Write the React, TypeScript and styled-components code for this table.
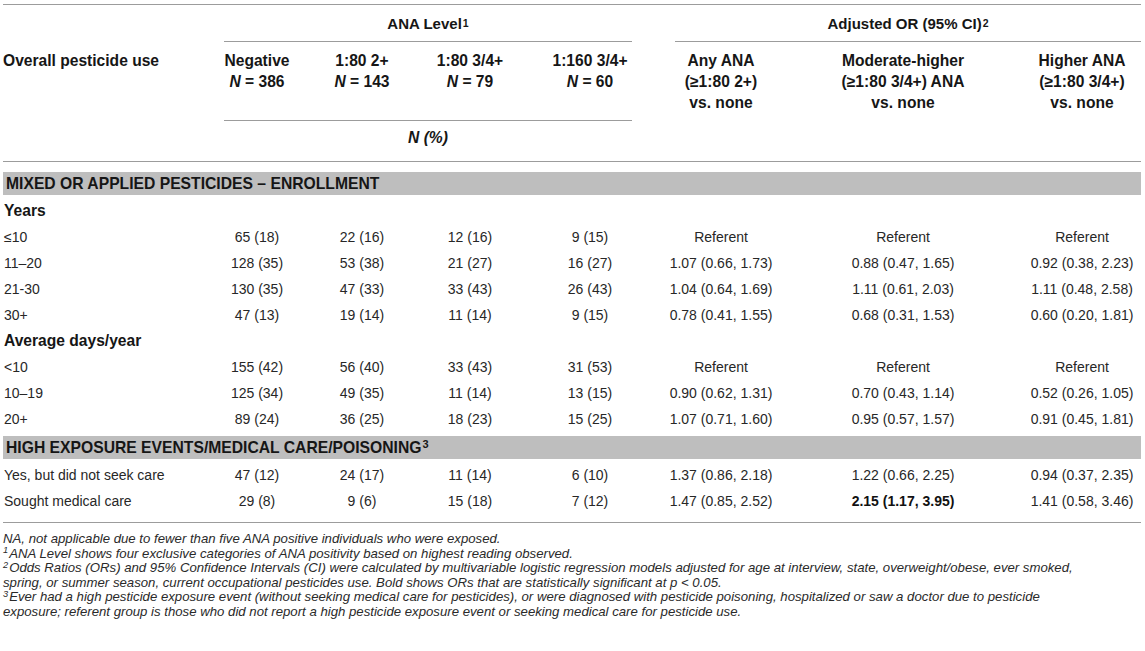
import React from "react";
import styled, { createGlobalStyle } from "styled-components";

const COLS = "211px 86px 124px 92px 148px 114px 250px 113px";
const LINE = "#9c9c9c";

const GlobalStyle = createGlobalStyle`
  html, body {
    margin: 0;
    padding: 0;
    background: #ffffff;
  }
  body {
    font-family: "Liberation Sans", Arial, sans-serif;
    color: #272727;
  }
`;

const Page = styled.div`
  width: 1138px;
  padding: 4px 4px 0 3px;
`;

const Table = styled.div`
  border-top: 1px solid ${LINE};
  border-bottom: 1px solid ${LINE};
`;

const Head = styled.div`
  display: grid;
  grid-template-columns: ${COLS};
  grid-template-rows: 37px 78px 41px;
  border-bottom: 1px solid ${LINE};
  font-weight: bold;
  font-size: 15.6px;
  color: #161616;
  white-space: nowrap;
`;

const Spanner = styled.div<{ $cols: string; $ml: number; $mr: number }>`
  grid-row: 1;
  grid-column: ${(p) => p.$cols};
  margin: 0 ${(p) => p.$mr}px 0 ${(p) => p.$ml}px;
  border-bottom: 1px solid ${LINE};
  display: flex;
  align-items: center;
  justify-content: center;
  font-size: 15px;
`;

const Sup = styled.sup`
  font-size: 0.7em;
  line-height: 0;
  vertical-align: 0.5em;
  margin-left: 1px;
`;

const Stub = styled.div`
  grid-row: 2;
  grid-column: 1;
  padding-top: 8px;
  line-height: 21px;
`;

const ColHead = styled.div<{ $col: number; $pr?: number }>`
  grid-row: 2;
  grid-column: ${(p) => p.$col};
  padding-top: 8px;
  padding-right: ${(p) => p.$pr ?? 0}px;
  line-height: 21px;
  text-align: center;
`;

const Unit = styled.div`
  grid-row: 3;
  grid-column: 2 / 6;
  margin: 0 32px 0 10px;
  border-top: 1px solid ${LINE};
  padding-top: 6px;
  line-height: 21px;
  text-align: center;
  font-style: italic;
`;

const Body = styled.div`
  padding: 6px 0 8px;
`;

const Row = styled.div`
  display: grid;
  grid-template-columns: ${COLS};
  height: 26px;
  align-items: center;
  font-size: 14px;
  white-space: nowrap;
  & > :last-child:not(:first-child) {
    padding-right: 5px;
  }
`;

const Label = styled.div<{ $head?: boolean }>`
  text-align: left;
  padding-left: 1px;
  font-weight: ${(p) => (p.$head ? "bold" : "normal")};
  font-size: ${(p) => (p.$head ? "15.6px" : "14px")};
  color: ${(p) => (p.$head ? "#161616" : "inherit")};
`;

const Cell = styled.div<{ $bold?: boolean }>`
  text-align: center;
  font-weight: ${(p) => (p.$bold ? "bold" : "normal")};
  color: ${(p) => (p.$bold ? "#111" : "inherit")};
`;

const Section = styled.div`
  padding: 4px 0 3px;
`;

const SectionBar = styled.div`
  background: #bebebe;
  height: 23px;
  line-height: 23px;
  padding-left: 3px;
  font-weight: bold;
  font-size: 15.7px;
  color: #161616;
  white-space: nowrap;
`;

const Notes = styled.div`
  padding-top: 9px;
  font-size: 13.2px;
  line-height: 14.5px;
  font-style: italic;
  color: #2a2a2a;
  white-space: nowrap;
`;

const NoteSup = styled.sup`
  font-size: 0.7em;
  line-height: 0;
  vertical-align: 0.45em;
  margin-right: 1px;
`;

type DataRow = { label: string; cells: string[]; bold?: number };

const sections: { title: string; note?: string; groups: { head?: string; rows: DataRow[] }[] }[] = [
  {
    title: "MIXED OR APPLIED PESTICIDES – ENROLLMENT",
    groups: [
      {
        head: "Years",
        rows: [
          { label: "≤10", cells: ["65 (18)", "22 (16)", "12 (16)", "9 (15)", "Referent", "Referent", "Referent"] },
          { label: "11–20", cells: ["128 (35)", "53 (38)", "21 (27)", "16 (27)", "1.07 (0.66, 1.73)", "0.88 (0.47, 1.65)", "0.92 (0.38, 2.23)"] },
          { label: "21-30", cells: ["130 (35)", "47 (33)", "33 (43)", "26 (43)", "1.04 (0.64, 1.69)", "1.11 (0.61, 2.03)", "1.11 (0.48, 2.58)"] },
          { label: "30+", cells: ["47 (13)", "19 (14)", "11 (14)", "9 (15)", "0.78 (0.41, 1.55)", "0.68 (0.31, 1.53)", "0.60 (0.20, 1.81)"] },
        ],
      },
      {
        head: "Average days/year",
        rows: [
          { label: "<10", cells: ["155 (42)", "56 (40)", "33 (43)", "31 (53)", "Referent", "Referent", "Referent"] },
          { label: "10–19", cells: ["125 (34)", "49 (35)", "11 (14)", "13 (15)", "0.90 (0.62, 1.31)", "0.70 (0.43, 1.14)", "0.52 (0.26, 1.05)"] },
          { label: "20+", cells: ["89 (24)", "36 (25)", "18 (23)", "15 (25)", "1.07 (0.71, 1.60)", "0.95 (0.57, 1.57)", "0.91 (0.45, 1.81)"] },
        ],
      },
    ],
  },
  {
    title: "HIGH EXPOSURE EVENTS/MEDICAL CARE/POISONING",
    note: "3",
    groups: [
      {
        rows: [
          { label: "Yes, but did not seek care", cells: ["47 (12)", "24 (17)", "11 (14)", "6 (10)", "1.37 (0.86, 2.18)", "1.22 (0.66, 2.25)", "0.94 (0.37, 2.35)"] },
          { label: "Sought medical care", cells: ["29 (8)", "9 (6)", "15 (18)", "7 (12)", "1.47 (0.85, 2.52)", "2.15 (1.17, 3.95)", "1.41 (0.58, 3.46)"], bold: 5 },
        ],
      },
    ],
  },
];

const columns: React.ReactNode[][] = [
  ["Negative", <><i>N</i> = 386</>],
  ["1:80 2+", <><i>N</i> = 143</>],
  ["1:80 3/4+", <><i>N</i> = 79</>],
  ["1:160 3/4+", <><i>N</i> = 60</>],
  ["Any ANA", "(≥1:80 2+)", "vs. none"],
  ["Moderate-higher", "(≥1:80 3/4+) ANA", "vs. none"],
  ["Higher ANA", "(≥1:80 3/4+)", "vs. none"],
];

export default function App() {
  return (
    <Page>
      <GlobalStyle />
      <Table>
        <Head>
          <Spanner $cols="2 / 6" $ml={10} $mr={32}>
            ANA Level<Sup>1</Sup>
          </Spanner>
          <Spanner $cols="6 / 9" $ml={11} $mr={0}>
            Adjusted OR (95% CI)<Sup>2</Sup>
          </Spanner>
          <Stub>Overall pesticide use</Stub>
          {columns.map((lines, i) => (
            <ColHead key={i} $col={i + 2} $pr={i === 6 ? 5 : 0}>
              {lines.map((line, j) => (
                <div key={j}>{line}</div>
              ))}
            </ColHead>
          ))}
          <Unit>N (%)</Unit>
        </Head>
        <Body>
          {sections.map((s) => (
            <React.Fragment key={s.title}>
              <Section>
                <SectionBar>
                  {s.title}
                  {s.note && <Sup>{s.note}</Sup>}
                </SectionBar>
              </Section>
              {s.groups.map((g, gi) => (
                <React.Fragment key={gi}>
                  {g.head && (
                    <Row>
                      <Label $head>{g.head}</Label>
                    </Row>
                  )}
                  {g.rows.map((r) => (
                    <Row key={r.label}>
                      <Label>{r.label}</Label>
                      {r.cells.map((c, ci) => (
                        <Cell key={ci} $bold={r.bold === ci}>
                          {c}
                        </Cell>
                      ))}
                    </Row>
                  ))}
                </React.Fragment>
              ))}
            </React.Fragment>
          ))}
        </Body>
      </Table>
      <Notes>
        <div>NA, not applicable due to fewer than five ANA positive individuals who were exposed.</div>
        <div>
          <NoteSup>1</NoteSup>ANA Level shows four exclusive categories of ANA positivity based on highest reading observed.
        </div>
        <div>
          <NoteSup>2</NoteSup>Odds Ratios (ORs) and 95% Confidence Intervals (CI) were calculated by multivariable logistic regression models adjusted for age at interview, state, overweight/obese, ever smoked,
          <br />
          spring, or summer season, current occupational pesticides use. Bold shows ORs that are statistically significant at p &lt; 0.05.
        </div>
        <div>
          <NoteSup>3</NoteSup>Ever had a high pesticide exposure event (without seeking medical care for pesticides), or were diagnosed with pesticide poisoning, hospitalized or saw a doctor due to pesticide
          <br />
          exposure; referent group is those who did not report a high pesticide exposure event or seeking medical care for pesticide use.
        </div>
      </Notes>
    </Page>
  );
}
